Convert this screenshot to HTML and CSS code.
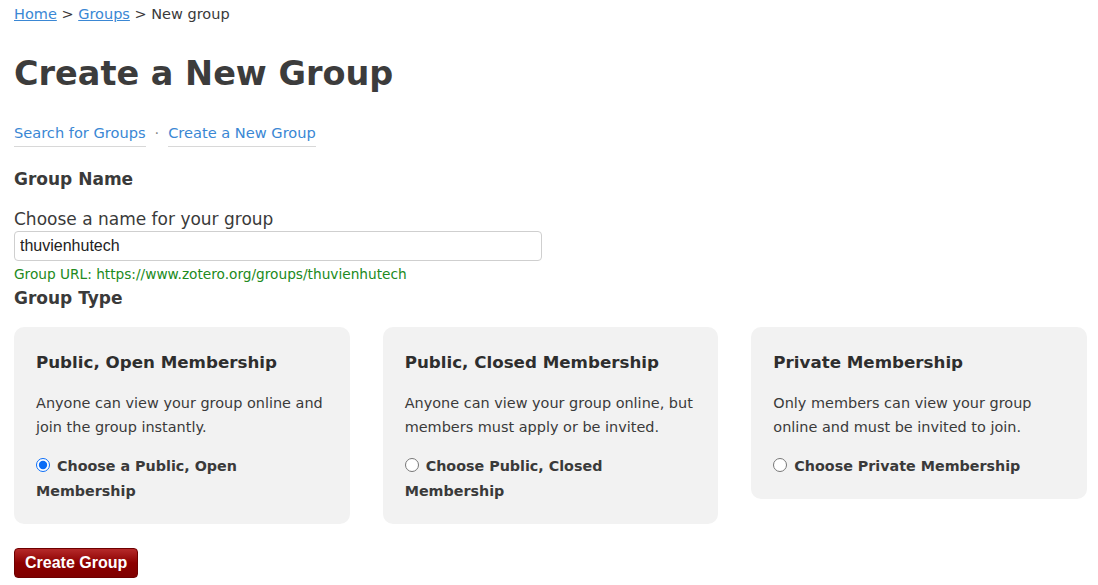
FILE: index.html
```html
<!DOCTYPE html>
<html>
<head>
<meta charset="utf-8">
<link rel="stylesheet" href="styles.css">
</head>
<body>
<div class="page">
  <nav class="crumbs"><a href="#">Home</a> &gt; <a href="#">Groups</a> &gt; New group</nav>
  <h1 class="title">Create a New Group</h1>
  <div class="subnav"><a href="#">Search for Groups</a><span class="dot">·</span><a href="#">Create a New Group</a></div>
  <h3 class="section">Group Name</h3>
  <label class="lbl">Choose a name for your group</label>
  <input class="name-input" type="text" value="thuvienhutech">
  <div class="url">Group URL: https://www.zotero.org/groups/thuvienhutech</div>
  <h3 class="section type">Group Type</h3>
  <div class="cards">
    <div class="card">
      <h4>Public, Open Membership</h4>
      <p>Anyone can view your group online and join the group instantly.</p>
      <label class="choice"><input type="radio" name="t" checked> Choose a Public, Open Membership</label>
    </div>
    <div class="card">
      <h4>Public, Closed Membership</h4>
      <p>Anyone can view your group online, but members must apply or be invited.</p>
      <label class="choice"><input type="radio" name="t"> Choose Public, Closed Membership</label>
    </div>
    <div class="card short">
      <h4>Private Membership</h4>
      <p>Only members can view your group online and must be invited to join.</p>
      <label class="choice"><input type="radio" name="t"> Choose Private Membership</label>
    </div>
  </div>
  <button class="submit">Create Group</button>
</div>
</body>
</html>
```
FILE: styles.css
```css
html, body { margin: 0; padding: 0; background: #fff; }
body { font-family: "DejaVu Sans", Verdana, sans-serif; color: #3a3a3a; }
.page { padding: 4px 11px 0 14px; }
a { color: #3a87d4; }
.crumbs { font-size: 14.5px; line-height: 20px; }
.crumbs a { text-decoration: underline; }
.title { font-size: 33.5px; font-weight: bold; margin: 28px 0 0; line-height: 44px; color: #3c3c3c; }
.subnav { margin-top: 27px; font-size: 14.6px; line-height: 20px; display: flex; align-items: flex-start; }
.subnav a { text-decoration: none; border-bottom: 1px solid #d8d8d8; padding-bottom: 3px; }
.subnav .dot { margin: 0 9px; color: #888; }
.section { font-size: 17px; font-weight: bold; margin: 20px 0 0; line-height: 24px; }
.lbl { display: block; font-size: 17px; margin-top: 16px; line-height: 24px; }
.name-input { display: block; box-sizing: border-box; width: 528px; height: 30px; margin-top: 0; border: 1px solid #cfcfcf; border-radius: 4px; padding: 0 5px; font-family: "Liberation Sans", Arial, sans-serif; font-size: 16px; color: #222; outline: none; }
.url { font-size: 13.7px; color: #218a21; margin-top: 5px; line-height: 17px; }
.section.type { margin-top: 3px; }
.cards { display: flex; gap: 33px; align-items: flex-start; margin-top: 17px; width: 1073px; }
.card { flex: 1; background: #f2f2f2; border-radius: 10px; padding: 23px 22px 19px; box-sizing: border-box; height: 197px; }
.card.short { height: 172px; }
.card h4 { margin: 0; font-size: 16.7px; line-height: 24px; font-weight: bold; color: #2e2e2e; }
.card p { margin: 17px 0 0; font-size: 14.45px; line-height: 24px; }
.choice { display: block; margin-top: 15px; font-size: 14.3px; font-weight: bold; line-height: 25px; }
.choice input { margin: 0 2px 0 0; width: 14px; height: 14px; vertical-align: -1px; accent-color: #0a6cf5; }
.submit { margin-top: 24px; height: 30px; padding: 0 10px; border: 1px solid #6e0000; border-radius: 4px; background: linear-gradient(#b52a2a, #8c0000 50%, #7f0000); color: #fff; font-family: "Liberation Sans", Arial, sans-serif; font-size: 16px; font-weight: bold; }
```
